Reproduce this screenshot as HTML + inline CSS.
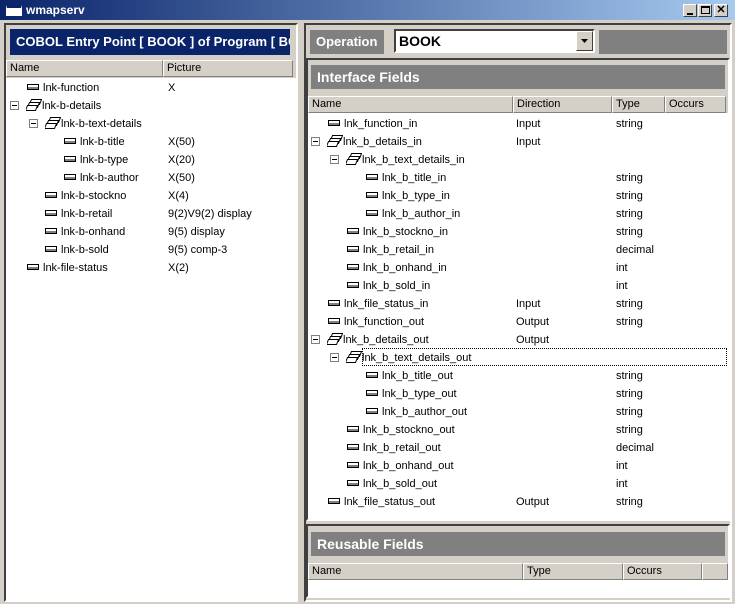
<!DOCTYPE html>
<html><head><meta charset="utf-8"><style>
*{margin:0;padding:0;box-sizing:border-box}
body{width:735px;height:604px;background:#d4d0c8;font-family:"Liberation Sans",Tahoma,sans-serif;font-size:11px;color:#000;position:relative;overflow:hidden}
.a{position:absolute}
.t{position:absolute;white-space:nowrap;line-height:14px;height:14px}
.hdr{position:absolute;height:17px;background:#d4d0c8;border-top:1px solid #fff;border-left:1px solid #fff;border-right:1px solid #808080;border-bottom:1px solid #808080;line-height:15px;padding-left:3px;white-space:nowrap;overflow:hidden}
.ban{position:absolute;background:#808080;color:#fff;font-weight:bold;font-size:14px;padding-left:6px;white-space:nowrap;overflow:hidden}
.white{position:absolute;background:#fff}
</style></head><body>
<div class="a" style="left:0;top:0;width:735px;height:20px;background:linear-gradient(to right,#0a246a,#a6caf0)"></div>
<div class="a" style="left:6px;top:5px;width:16px;height:11px;background:#fff;border:1px solid #fff;border-top:3px solid #0a246a"></div>
<div class="t" style="left:26px;top:3px;color:#fff;font-weight:bold;font-size:12px">wmapserv</div>
<div class="a" style="left:683px;top:4px;width:14px;height:13px;background:#d4d0c8;border:1px solid;border-color:#fff #404040 #404040 #fff"><div class="a" style="left:3px;top:8px;width:6px;height:2px;background:#000"></div></div>
<div class="a" style="left:698px;top:4px;width:14px;height:13px;background:#d4d0c8;border:1px solid;border-color:#fff #404040 #404040 #fff"><div class="a" style="left:2px;top:1px;width:9px;height:8px;border:1px solid #000;border-top-width:2px"></div></div>
<div class="a" style="left:714px;top:4px;width:14px;height:13px;background:#d4d0c8;border:1px solid;border-color:#fff #404040 #404040 #fff;font-size:11px;font-weight:bold;line-height:11px;text-align:center">✕</div>

<div class="a" style="left:4px;top:23px;width:294px;height:579px;border:2px solid;border-color:#404040 #fff #fff #404040"></div>
<div class="a" style="left:6px;top:25px;width:290px;height:33px;background:#d4d0c8"></div>
<div class="a" style="left:10px;top:29px;width:280px;height:26px;background:#0a246a;color:#fff;font-weight:bold;font-size:13px;line-height:26px;padding-left:6px;white-space:nowrap;overflow:hidden">COBOL Entry Point [ BOOK ] of Program [ BOOK</div>
<div class="white" style="left:6px;top:78px;width:290px;height:522px"></div>
<div class="a" style="left:6px;top:60px;width:290px;height:18px;background:#d4d0c8"></div>
<div class="hdr" style="left:6px;top:60px;width:157px">Name</div>
<div class="hdr" style="left:163px;top:60px;width:130px">Picture</div>

<div class="a" style="left:304px;top:23px;width:428px;height:579px;border:2px solid;border-color:#404040 #fff #fff #404040"></div>
<div class="a" style="left:310px;top:30px;width:74px;height:24px;background:#808080;color:#fff;font-weight:bold;font-size:13px;line-height:24px;padding-left:6px">Operation</div>
<div class="a" style="left:394px;top:29px;width:201px;height:24px;background:#fff;border:2px solid;border-color:#404040 #fff #fff #404040;font-weight:bold;font-size:14px;line-height:20px;padding-left:3px">BOOK</div>
<div class="a" style="left:576px;top:31px;width:17px;height:20px;background:#d4d0c8;border:1px solid;border-color:#fff #404040 #404040 #fff"><svg class="a" style="left:4px;top:7px" width="8" height="5"><path d="M0 0h7L3.5 4z" fill="#000"/></svg></div>
<div class="a" style="left:599px;top:30px;width:128px;height:24px;background:#808080"></div>

<div class="a" style="left:306px;top:58px;width:424px;height:463px;border:2px solid;border-color:#404040 #fff #fff #404040"></div>
<div class="ban" style="left:311px;top:65px;width:414px;height:24px;line-height:24px">Interface Fields</div>
<div class="white" style="left:308px;top:113px;width:420px;height:406px"></div>
<div class="hdr" style="left:308px;top:96px;width:205px">Name</div>
<div class="hdr" style="left:513px;top:96px;width:99px">Direction</div>
<div class="hdr" style="left:612px;top:96px;width:53px">Type</div>
<div class="hdr" style="left:665px;top:96px;width:61px">Occurs</div>

<div class="a" style="left:306px;top:524px;width:424px;height:74px;border:2px solid;border-color:#404040 #fff #fff #404040"></div>
<div class="ban" style="left:311px;top:532px;width:414px;height:24px;line-height:24px">Reusable Fields</div>
<div class="white" style="left:308px;top:580px;width:420px;height:16px"></div>
<div class="hdr" style="left:308px;top:563px;width:215px">Name</div>
<div class="hdr" style="left:523px;top:563px;width:100px">Type</div>
<div class="hdr" style="left:623px;top:563px;width:79px">Occurs</div>
<div class="hdr" style="left:702px;top:563px;width:26px"></div>

<svg width="0" height="0" style="position:absolute"><defs>
<symbol id="leaf" viewBox="0 0 12 8"><rect x="0.5" y="1.5" width="11" height="5" fill="#fff" stroke="#000"/><rect x="1" y="4" width="10" height="2" fill="#808080"/></symbol>
<symbol id="grp" viewBox="0 0 16 12"><path d="M5.5 0.5h10l-2 5h-10z" fill="#fff" stroke="#000"/><path d="M3.5 3.5h10l-2 5h-10z" fill="#fff" stroke="#000"/><path d="M1.5 6.5h10l-2 5h-10z" fill="#fff" stroke="#000"/></symbol>
<symbol id="exp" viewBox="0 0 9 9"><rect x="0.5" y="0.5" width="8" height="8" fill="#fff" stroke="#808080"/><path d="M2 4.5h5" stroke="#000"/></symbol>
</defs></svg>

<div id="L"></div>
<script>
function row(y,ind,type,name,cols){
  var h='';
  var top=y-6;
  if(type=='g'){
    h+='<svg class="a" style="left:'+(ind-16)+'px;top:'+(top+2)+'px" width="9" height="9"><use href="#exp"/></svg>';
    h+='<svg class="a" style="left:'+(ind)+'px;top:'+(top)+'px" width="16" height="12"><use href="#grp"/></svg>';
    h+='<div class="t" style="left:'+(ind+16)+'px;top:'+top+'px">'+name+'</div>';
  } else {
    h+='<svg class="a" style="left:'+(ind)+'px;top:'+(top+2)+'px" width="12" height="8"><use href="#leaf"/></svg>';
    h+='<div class="t" style="left:'+(ind+16)+'px;top:'+top+'px">'+name+'</div>';
  }
  for(var i=0;i<cols.length;i++) if(cols[i][1]) h+='<div class="t" style="left:'+cols[i][0]+'px;top:'+top+'px">'+cols[i][1]+'</div>';
  return h;
}
var out='';
var L=[[0,'l','lnk-function','X'],[0,'g','lnk-b-details',''],[1,'g','lnk-b-text-details',''],[2,'l','lnk-b-title','X(50)'],[2,'l','lnk-b-type','X(20)'],[2,'l','lnk-b-author','X(50)'],[1,'l','lnk-b-stockno','X(4)'],[1,'l','lnk-b-retail','9(2)V9(2) display'],[1,'l','lnk-b-onhand','9(5) display'],[1,'l','lnk-b-sold','9(5) comp-3'],[0,'l','lnk-file-status','X(2)']];
var LI={l:[27,45,64],g:[26,45,64]};
L.forEach(function(r,i){out+=row(87+18*i,LI[r[1]][r[0]],r[1],r[2],[[168,r[3]]]);});
var R=[[0,'l','lnk_function_in','Input','string'],[0,'g','lnk_b_details_in','Input',''],[1,'g','lnk_b_text_details_in','',''],[2,'l','lnk_b_title_in','','string'],[2,'l','lnk_b_type_in','','string'],[2,'l','lnk_b_author_in','','string'],[1,'l','lnk_b_stockno_in','','string'],[1,'l','lnk_b_retail_in','','decimal'],[1,'l','lnk_b_onhand_in','','int'],[1,'l','lnk_b_sold_in','','int'],[0,'l','lnk_file_status_in','Input','string'],
[0,'l','lnk_function_out','Output','string'],[0,'g','lnk_b_details_out','Output',''],[1,'g','lnk_b_text_details_out','',''],[2,'l','lnk_b_title_out','','string'],[2,'l','lnk_b_type_out','','string'],[2,'l','lnk_b_author_out','','string'],[1,'l','lnk_b_stockno_out','','string'],[1,'l','lnk_b_retail_out','','decimal'],[1,'l','lnk_b_onhand_out','','int'],[1,'l','lnk_b_sold_out','','int'],[0,'l','lnk_file_status_out','Output','string']];
var RI={l:[328,347,366],g:[327,346,365]};
R.forEach(function(r,i){out+=row(123+18*i,RI[r[1]][r[0]],r[1],r[2],[[516,r[3]],[616,r[4]]]);});
out+='<div class="a" style="left:362px;top:348px;width:365px;height:18px;border:1px dotted #000"></div>';
document.getElementById('L').innerHTML=out;
</script>
</body></html>
